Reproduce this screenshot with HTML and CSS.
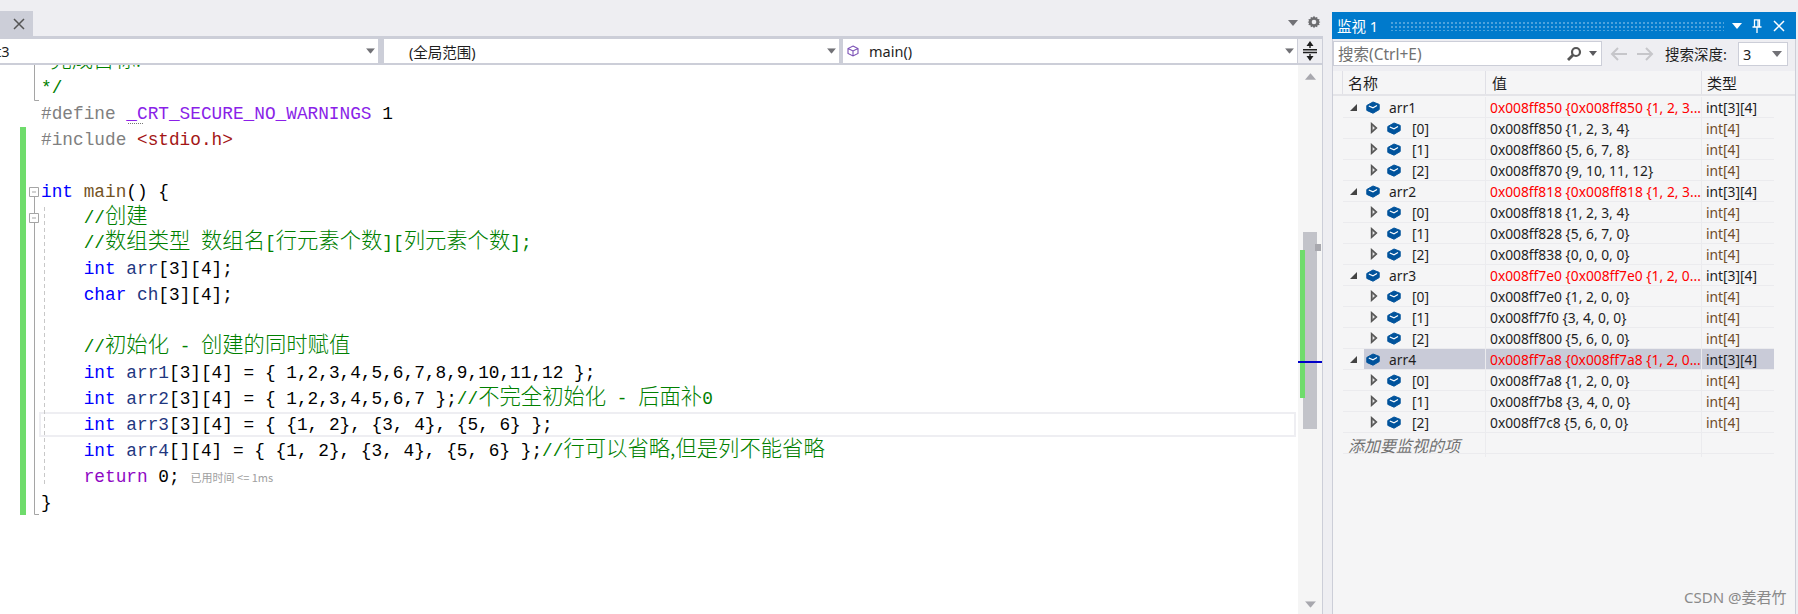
FILE: index.html
```html
<!DOCTYPE html>
<html lang="zh">
<head>
<meta charset="utf-8">
<title>监视 1</title>
<link rel="stylesheet" href="styles.css">
</head>
<body>
<svg class="defs" width="0" height="0">
  <symbol id="brick" viewBox="0 0 14 13"><path d="M.8 4.500 7 1 13.200 3.400V8.600L7 12.200.8 9.400Z" fill="#00539c" stroke="#00539c" stroke-linejoin="round"/><path d="M2.800 5 7 6.800 11 4.600" fill="none" stroke="#fff" stroke-width="1.100"/></symbol>
  <symbol id="open" viewBox="0 0 9 9"><path d="M8 1V8H1Z" fill="#444"/></symbol>
  <symbol id="closed" viewBox="0 0 8 12"><path d="M1.500 1.500 6.500 6 1.500 10.500Z" fill="#8a8a8a" stroke="#555" stroke-width="1.400"/><path d="M2.800 4.500 4.600 6 2.800 7.500Z" fill="#f5f5f6"/></symbol>
  <symbol id="down" viewBox="0 0 10 6"><path d="M0 0H10L5 6Z"/></symbol>
</svg>
<div class="app">
  <main class="left">
    <div class="strip">
      <div class="tab"><svg class="tab-x" viewBox="0 0 12 12"><path d="M1 1 11 11M11 1 1 11" stroke="#555" stroke-width="1.500"/></svg></div>
      <div class="strip-tools">
        <svg class="tri-s g7" viewBox="0 0 10 6"><use href="#down"/></svg>
        <svg class="gear" viewBox="0 0 14 14"><path d="M7 .8 8.200 2.600 10.200 1.900 10.500 4 12.600 4.300 11.900 6.300 13.400 7 11.900 8 12.600 9.900 10.500 10.200 10.200 12.200 8.200 11.500 7 13.200 5.800 11.500 3.800 12.200 3.500 10.200 1.400 9.900 2.100 8 .6 7 2.100 6.300 1.400 4.300 3.500 4 3.800 1.900 5.800 2.600Z" fill="#6d6d70"/><circle cx="7" cy="7" r="2.300" fill="#eeeef2"/></svg>
      </div>
    </div>
    <div class="nav">
      <div class="combo c1"><span class="c1-t">t3</span><svg class="tri-s g7" viewBox="0 0 10 6"><use href="#down"/></svg></div>
      <div class="combo c2"><span class="c2-t">(全局范围)</span><svg class="tri-s g7" viewBox="0 0 10 6"><use href="#down"/></svg></div>
      <div class="combo c3"><svg class="cube" viewBox="0 0 12 12"><path d="M6 1 11 3.500V8.500L6 11 1 8.500V3.500ZM1 3.500 6 6 11 3.500M6 6V11" fill="none" stroke="#7a4fb5" stroke-width="1.100"/></svg><span class="c3-t">main()</span><svg class="tri-s g7" viewBox="0 0 10 6"><use href="#down"/></svg></div>
      <div class="split"><svg viewBox="0 0 14 20" class="split-i"><path d="M7 0 10.500 5H3.500ZM7 20 3.500 15H10.500ZM6.300 4H7.700V7H6.300ZM6.300 13H7.700V16H6.300ZM0 8H14V9.400H0ZM0 10.800H14V12.200H0Z" fill="#1e1e1e"/></svg></div>
    </div>
    <div class="doc">
      <div class="code">
        <div class="curline"></div>
        <div class="greenbar"></div>
        <svg class="gutter" viewBox="0 0 150 460">
          <g fill="none" stroke="#a5a5a5">
            <path d="M34.500 0V35.500H39"/>
            <path d="M29.500 122.500H38.500V131.500H29.500ZM32 127H36"/>
            <path d="M34.500 132V148"/>
            <path d="M29.500 148.500H38.500V157.500H29.500ZM32 153H36"/>
            <path d="M34.500 158V449.500H39"/>
            <path d="M44.500 142V422" stroke="#c8c8c8" stroke-dasharray="4 3"/>
            <path d="M128 58.500H143" stroke="#777" stroke-dasharray="1 1"/>
          </g>
        </svg>
        <div class="lines">
          <div class="l c"><span class="z">*完成目标:</span></div>
          <div class="l c">*/</div>
          <div class="l"><span class="pp">#define</span> <span class="mac">_CRT_SECURE_NO_WARNINGS</span> 1</div>
          <div class="l"><span class="pp">#include</span> <span class="str">&lt;stdio.h&gt;</span></div>
          <div class="l"> </div>
          <div class="l"><span class="kw">int</span> <span class="fn">main</span>() {</div>
          <div class="l c">    //<span class="z">创建</span></div>
          <div class="l c">    //<span class="z">数组类型</span> <span class="z">数组名</span>[<span class="z">行元素个数</span>][<span class="z">列元素个数</span>];</div>
          <div class="l">    <span class="kw">int</span> <span class="var">arr</span>[3][4];</div>
          <div class="l">    <span class="kw">char</span> <span class="var">ch</span>[3][4];</div>
          <div class="l"> </div>
          <div class="l c">    //<span class="z">初始化</span> - <span class="z">创建的同时赋值</span></div>
          <div class="l">    <span class="kw">int</span> <span class="var">arr1</span>[3][4] = { 1,2,3,4,5,6,7,8,9,10,11,12 };</div>
          <div class="l">    <span class="kw">int</span> <span class="var">arr2</span>[3][4] = { 1,2,3,4,5,6,7 };<span class="c">//<span class="z">不完全初始化</span> - <span class="z">后面补</span>0</span></div>
          <div class="l">    <span class="kw">int</span> <span class="var">arr3</span>[3][4] = { {1, 2}, {3, 4}, {5, 6} };</div>
          <div class="l">    <span class="kw">int</span> <span class="var">arr4</span>[][4] = { {1, 2}, {3, 4}, {5, 6} };<span class="c">//<span class="z">行可以省略,但是列不能省略</span></span></div>
          <div class="l">    <span class="ret">return</span> 0;<span class="perf">已用时间 &lt;= 1ms</span></div>
          <div class="l">}</div>
        </div>
      </div>
      <div class="scroll">
        <svg class="sa" viewBox="0 0 10 6"><path d="M0 6H10L5 0Z"/></svg>
        <div class="thumb"></div>
        <div class="sgreen"></div>
        <div class="ssq"></div>
        <div class="sblue"></div>
        <svg class="sa" viewBox="0 0 10 6"><use href="#down"/></svg>
      </div>
    </div>
  </main>
  <aside class="panel">
    <div class="title">
      <span class="title-t">监视 1</span>
      <div class="dots"></div>
      <svg class="ti-d" viewBox="0 0 10 6"><path d="M0 0H10L5 6Z" fill="#fff"/></svg>
      <svg class="ti-p" viewBox="0 0 10 14"><path d="M2.500 .8H7.500V8H2.500ZM.5 8H9.500M5 8V14M6 1V8" fill="none" stroke="#fff" stroke-width="1.300"/></svg>
      <svg class="ti-x" viewBox="0 0 12 12"><path d="M1 1 11 11M11 1 1 11" stroke="#fff" stroke-width="1.500"/></svg>
    </div>
    <div class="search">
      <div class="sbox">
        <span class="ph">搜索(Ctrl+E)</span>
        <svg class="mag" viewBox="0 0 16 16"><circle cx="10" cy="6" r="4" fill="none" stroke="#555" stroke-width="2.200"/><path d="M7 9 2 14" stroke="#555" stroke-width="2.800"/></svg>
        <svg class="tri-s g5" viewBox="0 0 10 6"><use href="#down"/></svg>
      </div>
      <svg class="arrow" viewBox="0 0 18 14"><path d="M17 7H2M8 1 2 7 8 13" fill="none" stroke="#c6c6ca" stroke-width="2"/></svg>
      <svg class="arrow a2" viewBox="0 0 18 14"><path d="M1 7H16M10 1 16 7 10 13" fill="none" stroke="#c6c6ca" stroke-width="2"/></svg>
      <span class="depth-l">搜索深度:</span>
      <div class="depth"><span>3</span><svg class="tri-s g7" viewBox="0 0 10 6"><use href="#down"/></svg></div>
    </div>
    <div class="thead">
      <div class="th-g"></div>
      <div class="th n">名称</div>
      <div class="th v">值</div>
      <div class="th t">类型</div>
    </div>
    <div class="rows">
      <div class="row"><div class="name"><svg class="tri t-o"><use href="#open"/></svg><div class="in"><svg class="brick"><use href="#brick"/></svg><span>arr1</span></div></div><div class="val red">0x008ff850 {0x008ff850 {1, 2, 3...</div><div class="typ">int[3][4]</div></div>
      <div class="row child"><div class="name"><svg class="tri t-c"><use href="#closed"/></svg><div class="in"><svg class="brick"><use href="#brick"/></svg><span>[0]</span></div></div><div class="val">0x008ff850 {1, 2, 3, 4}</div><div class="typ">int[4]</div></div>
      <div class="row child"><div class="name"><svg class="tri t-c"><use href="#closed"/></svg><div class="in"><svg class="brick"><use href="#brick"/></svg><span>[1]</span></div></div><div class="val">0x008ff860 {5, 6, 7, 8}</div><div class="typ">int[4]</div></div>
      <div class="row child"><div class="name"><svg class="tri t-c"><use href="#closed"/></svg><div class="in"><svg class="brick"><use href="#brick"/></svg><span>[2]</span></div></div><div class="val">0x008ff870 {9, 10, 11, 12}</div><div class="typ">int[4]</div></div>
      <div class="row"><div class="name"><svg class="tri t-o"><use href="#open"/></svg><div class="in"><svg class="brick"><use href="#brick"/></svg><span>arr2</span></div></div><div class="val red">0x008ff818 {0x008ff818 {1, 2, 3...</div><div class="typ">int[3][4]</div></div>
      <div class="row child"><div class="name"><svg class="tri t-c"><use href="#closed"/></svg><div class="in"><svg class="brick"><use href="#brick"/></svg><span>[0]</span></div></div><div class="val">0x008ff818 {1, 2, 3, 4}</div><div class="typ">int[4]</div></div>
      <div class="row child"><div class="name"><svg class="tri t-c"><use href="#closed"/></svg><div class="in"><svg class="brick"><use href="#brick"/></svg><span>[1]</span></div></div><div class="val">0x008ff828 {5, 6, 7, 0}</div><div class="typ">int[4]</div></div>
      <div class="row child"><div class="name"><svg class="tri t-c"><use href="#closed"/></svg><div class="in"><svg class="brick"><use href="#brick"/></svg><span>[2]</span></div></div><div class="val">0x008ff838 {0, 0, 0, 0}</div><div class="typ">int[4]</div></div>
      <div class="row"><div class="name"><svg class="tri t-o"><use href="#open"/></svg><div class="in"><svg class="brick"><use href="#brick"/></svg><span>arr3</span></div></div><div class="val red">0x008ff7e0 {0x008ff7e0 {1, 2, 0...</div><div class="typ">int[3][4]</div></div>
      <div class="row child"><div class="name"><svg class="tri t-c"><use href="#closed"/></svg><div class="in"><svg class="brick"><use href="#brick"/></svg><span>[0]</span></div></div><div class="val">0x008ff7e0 {1, 2, 0, 0}</div><div class="typ">int[4]</div></div>
      <div class="row child"><div class="name"><svg class="tri t-c"><use href="#closed"/></svg><div class="in"><svg class="brick"><use href="#brick"/></svg><span>[1]</span></div></div><div class="val">0x008ff7f0 {3, 4, 0, 0}</div><div class="typ">int[4]</div></div>
      <div class="row child"><div class="name"><svg class="tri t-c"><use href="#closed"/></svg><div class="in"><svg class="brick"><use href="#brick"/></svg><span>[2]</span></div></div><div class="val">0x008ff800 {5, 6, 0, 0}</div><div class="typ">int[4]</div></div>
      <div class="row sel"><div class="name"><svg class="tri t-o"><use href="#open"/></svg><div class="in"><svg class="brick"><use href="#brick"/></svg><span>arr4</span></div></div><div class="val red">0x008ff7a8 {0x008ff7a8 {1, 2, 0...</div><div class="typ">int[3][4]</div></div>
      <div class="row child"><div class="name"><svg class="tri t-c"><use href="#closed"/></svg><div class="in"><svg class="brick"><use href="#brick"/></svg><span>[0]</span></div></div><div class="val">0x008ff7a8 {1, 2, 0, 0}</div><div class="typ">int[4]</div></div>
      <div class="row child"><div class="name"><svg class="tri t-c"><use href="#closed"/></svg><div class="in"><svg class="brick"><use href="#brick"/></svg><span>[1]</span></div></div><div class="val">0x008ff7b8 {3, 4, 0, 0}</div><div class="typ">int[4]</div></div>
      <div class="row child"><div class="name"><svg class="tri t-c"><use href="#closed"/></svg><div class="in"><svg class="brick"><use href="#brick"/></svg><span>[2]</span></div></div><div class="val">0x008ff7c8 {5, 6, 0, 0}</div><div class="typ">int[4]</div></div>
      <div class="row add"><div class="name"><span class="add-t">添加要监视的项</span></div><div class="val"></div><div class="typ"></div></div>
    </div>
    <div class="mark">CSDN @姜君竹</div>
  </aside>
</div>
</body>
</html>
```
FILE: styles.css
```css
* { box-sizing: border-box; }
html, body { margin: 0; height: 100%; overflow: hidden; }
body { background: #eeeef2; font-family: "Noto Sans", "Noto Sans CJK SC", sans-serif; font-size: 13.8px; color: #1e1e1e; }
.defs { position: absolute; }
.app { display: flex; width: 1798px; height: 614px; }

.left { width: 1323px; display: flex; flex-direction: column; }
.strip { height: 36px; display: flex; justify-content: space-between; align-items: flex-end; }
.tab { width: 33px; height: 25px; background: #ccced8; display: flex; align-items: center; justify-content: center; }
.tab-x { width: 12px; height: 12px; margin-left: 5px; }
.strip-tools { display: flex; align-items: center; gap: 9px; height: 26px; padding-right: 2px; }
.tri-s { width: 10px; height: 6px; flex: none; }
.g7 { fill: #717176; }
.g5 { fill: #5a5a5e; }
.gear { width: 14px; height: 14px; margin-top: -3px; }

.nav { height: 29px; display: flex; background: #ccced8; padding: 3px 1px 2px 0; gap: 0; }
.combo { background: #fff; display: flex; align-items: center; height: 24px; font-size: 14.5px; position: relative; overflow: hidden; }
.combo .tri-s { margin-left: auto; margin-right: 3px; width: 9px; }
.c1 { width: 378px; }
.c2 { width: 455px; margin-left: 6px; }
.c3 { width: 454px; margin-left: 4px; }
.c1-t { margin-left: -4px; }
.c2-t { margin-left: 25px; }
.cube { width: 12px; height: 12px; margin-left: 4px; }
.c3-t { margin-left: 10px; }
.split { width: 24px; margin-left: 1px; background: #eeeef2; display: flex; align-items: center; justify-content: center; }
.split-i { width: 14px; height: 20px; }

.doc { flex: 1; display: flex; min-height: 0; border-right: 1px solid #ccced8; }
.code { flex: 1; position: relative; background: #fff; overflow: hidden; }
.lines { position: relative; margin-top: -15px; font-family: "Liberation Mono", "Noto Sans CJK SC", monospace; font-size: 17.78px; color: #000; }
.l { height: 25.93px; line-height: 25.93px; padding-left: 41px; white-space: pre; }
.z { font-family: "Noto Sans CJK SC", sans-serif; font-size: 21.33px; font-weight: 300; line-height: 0; }
.c { color: #008000; }
.pp { color: #808080; }
.mac { color: #8a1fe8; }
.str { color: #a31515; }
.kw { color: #0000ff; }
.fn { color: #74531f; }
.var { color: #1f377f; }
.ret { color: #8f08c4; }
.perf { font-family: "Noto Sans CJK SC", sans-serif; font-size: 11px; line-height: 0; color: #a0a0a0; margin-left: 11px; }
.curline { position: absolute; left: 39px; top: 347px; width: 1257px; height: 25px; border: 2px solid #eeeef2; }
.greenbar { position: absolute; left: 20px; top: 62px; width: 6px; height: 388px; background: #6fdc6c; }
.gutter { position: absolute; left: 0; top: 0; width: 150px; height: 460px; }

.scroll { width: 24px; position: relative; background: #f5f5f5; display: flex; flex-direction: column; justify-content: space-between; align-items: center; padding: 8px 0 6px; margin-left: 0; }
.sa { width: 11px; height: 7px; fill: #a8a8ae; margin-left: 1px; }
.thumb { position: absolute; left: 5px; top: 167px; width: 14px; height: 197px; background: #c2c3c9; }
.sgreen { position: absolute; left: 2px; top: 185px; width: 5px; height: 148px; background: #6fdc6c; }
.ssq { position: absolute; left: 17px; top: 179px; width: 6px; height: 7px; background: #a8a8ae; }
.sblue { position: absolute; left: 0; top: 296px; width: 24px; height: 2px; background: #0000c8; }

.panel { width: 464px; margin-left: 9px; margin-top: 12px; background: #f5f5f6; border-left: 1px solid #ccced8; border-right: 1px solid #ccced8; display: flex; flex-direction: column; position: relative; }
.title { height: 27px; margin: 0 -1px; background: #007acc; color: #fff; display: flex; align-items: center; padding: 0 11px 0 5px; font-size: 14.5px; }
.title-t { width: 53px; flex: none; }
.dots { flex: 1; height: 10px; background-image: radial-gradient(circle, #4ea3dc 1px, transparent 1.2px); background-size: 4px 4px; }
.ti-d { width: 10px; height: 6px; margin-left: 8px; }
.ti-p { width: 10px; height: 14px; margin-left: 10px; }
.ti-x { width: 12px; height: 12px; margin-left: 11px; }

.search { height: 32px; padding: 2px 0 5px; display: flex; align-items: center; background: #eeeef2; font-size: 14.5px; }
.sbox { width: 269px; height: 25px; background: #fff; border: 1px solid #ccced8; display: flex; align-items: center; padding: 0 4px 0 4px; }
.ph { color: #717171; flex: 1; font-size: 15.5px; }
.mag { width: 16px; height: 16px; margin-right: 7px; }
.sbox .tri-s { width: 8px; height: 5px; }
.arrow { width: 18px; height: 14px; margin-left: 8px; }
.a2 { margin-left: 8px; }
.depth-l { margin-left: 11px; width: 73px; flex: none; }
.depth { width: 50px; height: 24px; background: #fff; border: 1px solid #ccced8; display: flex; align-items: center; justify-content: space-between; padding: 0 5px 0 4px; }

.thead { height: 25px; display: flex; background: #f5f5f6; border-bottom: 2px solid #e4e4e8; font-size: 15px; }
.th-g { width: 10px; border-right: 1px solid #e0e0e6; }
.th { padding-left: 5px; display: flex; align-items: center; border-right: 1px solid #e0e0e6; }
.th.n { width: 143px; }
.th.v { width: 216px; padding-left: 6px; }
.th.t { width: 72px; border-right: 0; padding-left: 5px; }

.rows { padding-top: 1px; }
.row { height: 21px; margin-left: 10px; width: 431px; display: grid; grid-template-columns: 143px 216px 72px; border-bottom: 1px solid #ebebee; }
.name { display: flex; align-items: center; border-right: 1px solid #ebebee; }
.in { flex: 1; align-self: stretch; display: flex; align-items: center; padding-left: 2px; gap: 9px; }
.val, .typ { display: flex; align-items: center; padding-left: 4px; white-space: nowrap; overflow: hidden; }
.val { border-right: 1px solid #ebebee; }
.typ { color: #1e1e1e; }
.red { color: #ff0000; }
.tri { flex: none; }
.t-o { width: 9px; height: 9px; margin: 0 6px 0 6px; }
.t-c { width: 8px; height: 12px; margin: 0 6px 0 27px; }
.brick { width: 14px; height: 13px; flex: none; }
.child .in { padding-left: 3px; gap: 11px; }
.child .typ { color: #6e4c2a; }
.sel .in, .sel .val, .sel .typ { background: #c9cbd8; }
.add-t { font-style: italic; color: #717171; margin-left: 5px; font-size: 16px; }
.mark { position: absolute; left: 351px; top: 574px; color: #8a8a8a; font-size: 15px; white-space: nowrap; }
```
